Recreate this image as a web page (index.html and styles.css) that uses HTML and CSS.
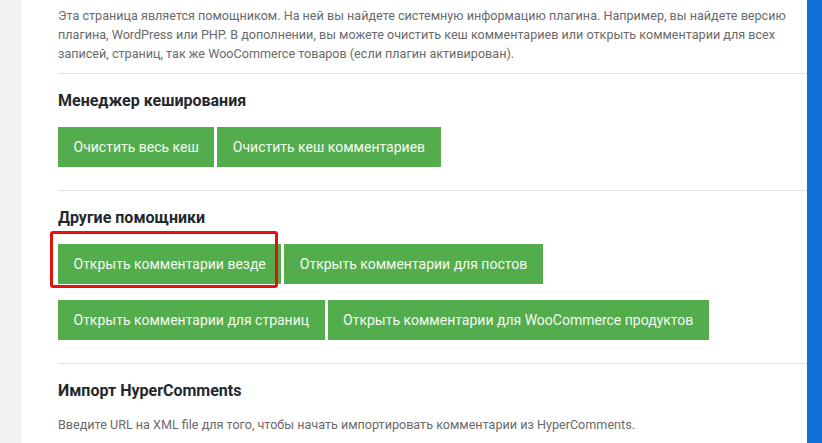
FILE: index.html
```html
<!DOCTYPE html>
<html lang="ru">
<head>
<meta charset="utf-8">
<link rel="stylesheet" href="styles.css">
</head>
<body>
<div class="layout">
  <div class="gutter"></div>
  <main class="panel">
    <p class="text intro">Эта страница является помощником. На ней вы найдете системную информацию плагина. Например, вы найдете версию плагина, WordPress или PHP. В дополнении, вы можете очистить кеш комментариев или открыть комментарии для всех записей, страниц, так же WooCommerce товаров (если плагин активирован).</p>
    <hr class="divider">
    <section class="section">
      <h3 class="title">Менеджер кеширования</h3>
      <div class="buttons">
        <button class="btn">Очистить весь кеш</button>
        <button class="btn">Очистить кеш комментариев</button>
      </div>
    </section>
    <hr class="divider">
    <section class="section">
      <h3 class="title">Другие помощники</h3>
      <div class="buttons">
        <button class="btn marked">Открыть комментарии везде<span class="highlight"></span></button>
        <button class="btn">Открыть комментарии для постов</button>
      </div>
      <div class="buttons">
        <button class="btn">Открыть комментарии для страниц</button>
        <button class="btn">Открыть комментарии для WooCommerce продуктов</button>
      </div>
    </section>
    <hr class="divider">
    <section class="section">
      <h3 class="title">Импорт HyperComments</h3>
      <p class="text note">Введите URL на XML file для того, чтобы начать импортировать комментарии из HyperComments.</p>
    </section>
  </main>
  <div class="bar"></div>
</div>
</body>
</html>
```
FILE: styles.css
```css
html, body {
  margin: 0;
  padding: 0;
  height: 100%;
  overflow: hidden;
}
body {
  background: #f1f1f1;
  font-family: Roboto, "Liberation Sans", sans-serif;
}
.layout {
  display: flex;
  height: 443px;
}
.gutter {
  width: 21px;
  flex: none;
}
.panel {
  flex: 1;
  background: #ffffff;
  padding: 6px 0 0 37px;
  overflow: hidden;
}
.bar {
  width: 15px;
  flex: none;
  background: #1270d9;
}
.text {
  margin: 0;
  font-size: 12.6px;
  line-height: 19px;
  color: #6a6a6a;
}
.intro {
  margin-bottom: 10px;
}
.divider {
  border: 0;
  height: 1px;
  background: #e3e3e3;
  margin: 0;
}
.section {
  padding: 17px 0 23px;
}
.title {
  margin: 0 0 16px;
  font-size: 16px;
  line-height: 20px;
  font-weight: 700;
  color: #23282d;
}
.buttons {
  display: flex;
  gap: 3px;
  margin-bottom: 16px;
}
.buttons:last-child {
  margin-bottom: 0;
}
.btn {
  position: relative;
  height: 40px;
  padding: 0 15.5px;
  border: 0;
  border-radius: 0;
  background: #53ad4c;
  color: #f4fbf2;
  font-family: Roboto, "Liberation Sans", sans-serif;
  font-size: 14px;
  cursor: pointer;
}
.highlight {
  position: absolute;
  left: -8px;
  top: -13px;
  width: 222px;
  height: 51px;
  border: 3px solid #e3120f;
  border-radius: 3px;
  pointer-events: none;
}
.note {
  margin-top: -2px;
}
```
